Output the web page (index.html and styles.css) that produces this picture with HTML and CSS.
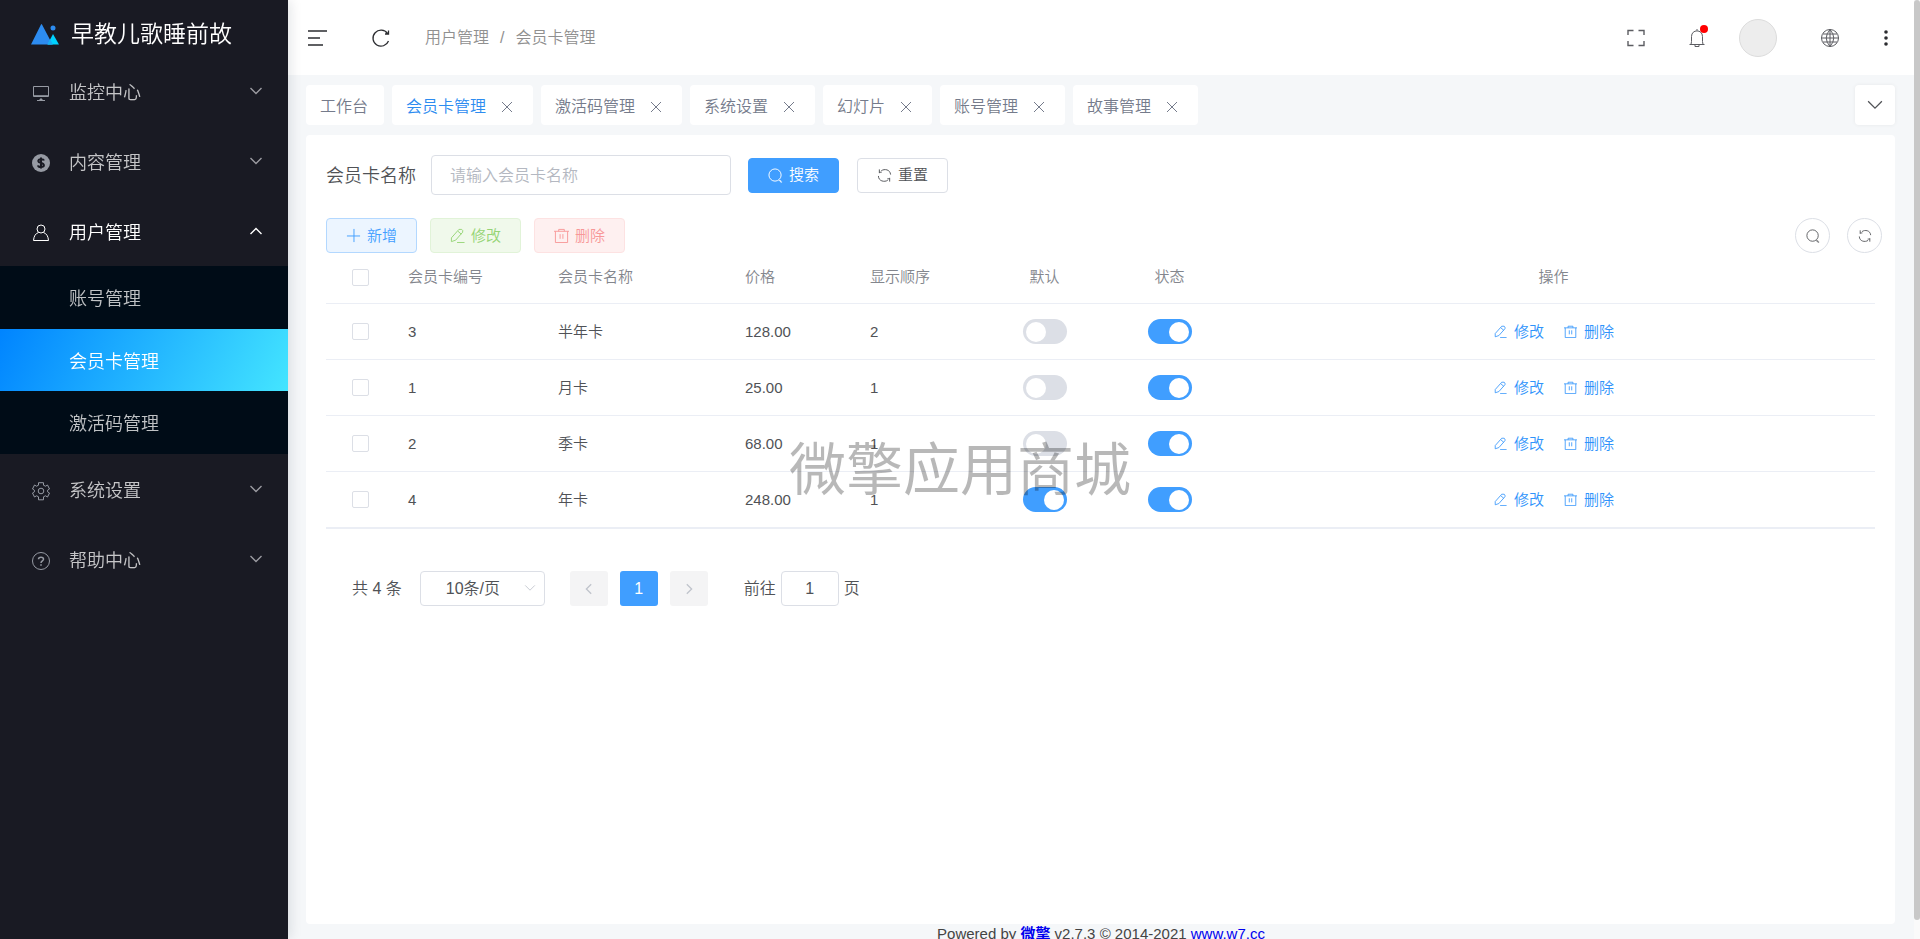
FILE: index.html
```html
<!DOCTYPE html>
<html lang="zh-CN">
<head>
<meta charset="utf-8">
<title>会员卡管理</title>
<link rel="stylesheet" href="styles.css">
</head>
<body>
<svg class="sprite" aria-hidden="true">
  <symbol id="i-down" viewBox="0 0 16 16"><path d="M2.5 5 8 10.5 13.5 5"/></symbol>
  <symbol id="i-up" viewBox="0 0 16 16"><path d="M2.5 11 8 5.500 13.500 11"/></symbol>
  <symbol id="i-close" viewBox="0 0 16 16"><path d="M3 3l10 10M13 3 3 13"/></symbol>
  <symbol id="i-search" viewBox="0 0 16 16"><circle cx="7.500" cy="7.500" r="6.500"/><path d="M11.500 13.500h2v1.500h1.500"/></symbol>
  <symbol id="i-sync" viewBox="0 0 16 16"><path d="M2.500 1.500v4M2.500 4.500H5M4.500 3C8 .5 14 1.500 14.500 7M1.500 8.500c0 5.500 6.500 7 10 4.500M13.500 14.500v-4M13.500 11.500H11"/></symbol>
  <symbol id="i-edit" viewBox="0 0 16 16"><path d="M9.500 1.500h3l1 1v2L6 13l-4.500 1.500V10.500zM8.500 3.500l3.500 3M7.500 15.500h8"/></symbol>
  <symbol id="i-trash" viewBox="0 0 16 16"><path d="M0 3.500h16M5 3.500v-2h6v2M1.500 3.500v12h13v-12M6.500 6.500v5M9.500 6.500v5"/></symbol>
  <symbol id="i-plus" viewBox="0 0 16 16"><path d="M8.500 1v14M1 8.500h14"/></symbol>
</svg>
<div class="app">
  <aside class="sidebar">
    <div class="brand">
      <svg class="logo" viewBox="0 0 28 22" aria-hidden="true"><path fill="#2d8cf0" d="M10 1.500Q10.500 .5 11 1.500L21.500 21.500H0z"/><path fill="#00d2ff" d="M22 11 28 21.500H16.500z"/><path fill="#1cabf2" d="M19.300 16 21.800 21.500H16.500z"/><circle cx="22" cy="5" r="2.500" fill="#2d8cf0"/></svg>
      <span>早教儿歌睡前故</span>
    </div>
    <nav>
      <button class="menu"><svg class="ico" viewBox="0 0 18 18"><path d="M1.500 2.500h15v10h-15zM2 11.700h14M5 16.500h8M9 14v2.500"/><path d="M7.500 15.500h3"/></svg><span>监控中心</span><svg class="arrow"><use href="#i-down"/></svg></button>
      <button class="menu"><svg class="ico" viewBox="0 0 18 18"><circle cx="9" cy="9" r="9" fill="currentColor" stroke="none"/><path class="dark" d="M12 6.500C11.500 4.700 6.300 4.500 6.300 7 6.300 9.300 11.900 8.500 11.900 11.200 11.900 13.500 6.200 13.500 6 11.300M9 3.500v11"/></svg><span>内容管理</span><svg class="arrow"><use href="#i-down"/></svg></button>
      <button class="menu open"><svg class="ico" viewBox="0 0 18 18"><circle cx="9" cy="5" r="4"/><path d="M6.500 8.500Q2 10 1.500 16.500h15Q16 10 11.500 8.500"/></svg><span>用户管理</span><svg class="arrow"><use href="#i-up"/></svg></button>
      <div class="submenu">
        <a href="#">账号管理</a>
        <a href="#" class="active">会员卡管理</a>
        <a href="#">激活码管理</a>
      </div>
      <button class="menu"><svg class="ico" viewBox="0 0 18 18"><path d="M6.500.7h5v2.500l2 1 2-1.200 2 4-2 1.300v1.400l2 1.300-2 4-2-1.200-2 1v3h-5v-3l-2-1-2 1.200-2-4 2-1.300V8.300L.5 7l2-4 2 1.200 2-1z"/><circle cx="9" cy="9" r="2.800"/></svg><span>系统设置</span><svg class="arrow"><use href="#i-down"/></svg></button>
      <button class="menu"><svg class="ico" viewBox="0 0 18 18"><circle cx="9" cy="9" r="8.500"/><path d="M6.500 7.200C6.500 4.500 11.500 4.500 11.500 7.200 11.500 8.800 9 9 9 11M9 12.300v1.500" stroke-width="1.500"/></svg><span>帮助中心</span><svg class="arrow"><use href="#i-down"/></svg></button>
    </nav>
  </aside>

  <main class="main">
    <header class="header">
      <button class="tool" aria-label="折叠菜单"><svg class="fold" viewBox="0 0 20 18"><path d="M0 2h19M0 9h12M0 16h15"/></svg></button>
      <button class="tool reload" aria-label="刷新"><svg viewBox="0 0 18 18"><path d="M16.500 12A8 8 0 1 1 15.500 4.500M16.500 1.500v3.500h-3.500"/></svg></button>
      <div class="crumbs"><a href="#">用户管理</a><span>/</span><a href="#">会员卡管理</a></div>
      <div class="tools">
        <button class="tool full" aria-label="全屏"><svg viewBox="0 0 18 18"><path d="M1 6V1.500h5.500M11.500 1.500H17V6M17 12v4.500h-5.500M6.500 16.500H1V12"/></svg></button>
        <button class="tool bell" aria-label="通知"><svg viewBox="0 0 18 20"><path d="M9 1v1.500M1.500 16.500h15M3 16.500l.5-3v-5C3.500 1 14.500 1 14.500 8.500v5l.5 3M7 17v1.500h4V17"/></svg><i class="dot"></i></button>
        <button class="avatar" aria-label="用户"></button>
        <button class="tool globe" aria-label="语言"><svg viewBox="0 0 18 18"><circle cx="9" cy="9" r="8.500"/><path d="M.5 9h17M2 5h14M2 13h14M9 .5v17M9 .5Q1.500 9 9 17.500M9 .5Q16.500 9 9 17.500"/></svg></button>
        <button class="tool more" aria-label="更多"><svg viewBox="0 0 18 18"><circle cx="9" cy="3" r="1.800"/><circle cx="9" cy="9" r="1.800"/><circle cx="9" cy="15" r="1.800"/></svg></button>
      </div>
    </header>

    <div class="tabbar">
      <div class="tab"><a href="#">工作台</a></div>
      <div class="tab current"><a href="#">会员卡管理</a><button aria-label="关闭"><svg><use href="#i-close"/></svg></button></div>
      <div class="tab"><a href="#">激活码管理</a><button aria-label="关闭"><svg><use href="#i-close"/></svg></button></div>
      <div class="tab"><a href="#">系统设置</a><button aria-label="关闭"><svg><use href="#i-close"/></svg></button></div>
      <div class="tab"><a href="#">幻灯片</a><button aria-label="关闭"><svg><use href="#i-close"/></svg></button></div>
      <div class="tab"><a href="#">账号管理</a><button aria-label="关闭"><svg><use href="#i-close"/></svg></button></div>
      <div class="tab"><a href="#">故事管理</a><button aria-label="关闭"><svg><use href="#i-close"/></svg></button></div>
      <button class="tabmenu" aria-label="标签操作"><svg><use href="#i-down"/></svg></button>
    </div>

    <section class="panel">
      <form class="search">
        <label for="name">会员卡名称</label>
        <input id="name" type="text" placeholder="请输入会员卡名称">
        <button type="button" class="btn primary"><svg><use href="#i-search"/></svg>搜索</button>
        <button type="reset" class="btn"><svg><use href="#i-sync"/></svg>重置</button>
      </form>
      <div class="actions">
        <button class="btn add"><svg><use href="#i-plus"/></svg>新增</button>
        <button class="btn edit" disabled><svg><use href="#i-edit"/></svg>修改</button>
        <button class="btn del" disabled><svg><use href="#i-trash"/></svg>删除</button>
        <button class="round first" aria-label="显示搜索"><svg><use href="#i-search"/></svg></button>
        <button class="round" aria-label="刷新列表"><svg><use href="#i-sync"/></svg></button>
      </div>

      <table class="grid">
        <colgroup><col class="c-check"><col class="c-id"><col class="c-name"><col class="c-num"><col class="c-num"><col class="c-num"><col class="c-num"><col></colgroup>
        <thead>
          <tr><th class="mid"><input type="checkbox" class="box" aria-label="全选"></th><th>会员卡编号</th><th>会员卡名称</th><th>价格</th><th>显示顺序</th><th class="mid">默认</th><th class="mid">状态</th><th class="mid">操作</th></tr>
        </thead>
        <tbody>
          <tr><td class="mid"><input type="checkbox" class="box" aria-label="选择 3"></td><td>3</td><td>半年卡</td><td>128.00</td><td>2</td><td class="mid"><input type="checkbox" class="switch" aria-label="默认"></td><td class="mid"><input type="checkbox" class="switch" aria-label="状态" checked></td><td><div class="ops"><button><svg><use href="#i-edit"/></svg>修改</button><button><svg><use href="#i-trash"/></svg>删除</button></div></td></tr>
          <tr><td class="mid"><input type="checkbox" class="box" aria-label="选择 1"></td><td>1</td><td>月卡</td><td>25.00</td><td>1</td><td class="mid"><input type="checkbox" class="switch" aria-label="默认"></td><td class="mid"><input type="checkbox" class="switch" aria-label="状态" checked></td><td><div class="ops"><button><svg><use href="#i-edit"/></svg>修改</button><button><svg><use href="#i-trash"/></svg>删除</button></div></td></tr>
          <tr><td class="mid"><input type="checkbox" class="box" aria-label="选择 2"></td><td>2</td><td>季卡</td><td>68.00</td><td>1</td><td class="mid"><input type="checkbox" class="switch" aria-label="默认"></td><td class="mid"><input type="checkbox" class="switch" aria-label="状态" checked></td><td><div class="ops"><button><svg><use href="#i-edit"/></svg>修改</button><button><svg><use href="#i-trash"/></svg>删除</button></div></td></tr>
          <tr><td class="mid"><input type="checkbox" class="box" aria-label="选择 4"></td><td>4</td><td>年卡</td><td>248.00</td><td>1</td><td class="mid"><input type="checkbox" class="switch" aria-label="默认" checked></td><td class="mid"><input type="checkbox" class="switch" aria-label="状态" checked></td><td><div class="ops"><button><svg><use href="#i-edit"/></svg>修改</button><button><svg><use href="#i-trash"/></svg>删除</button></div></td></tr>
        </tbody>
      </table>

      <div class="pager">
        <span>共 4 条</span>
        <div class="size"><select aria-label="每页条数"><option>10条/页</option></select><svg><use href="#i-down"/></svg></div>
        <div class="pages">
          <button disabled aria-label="上一页"><svg viewBox="0 0 16 16"><path d="M10.500 2.500 5 8l5.500 5.500"/></svg></button>
          <button class="on">1</button>
          <button disabled aria-label="下一页"><svg viewBox="0 0 16 16"><path d="M5.500 2.500 11 8l-5.500 5.500"/></svg></button>
        </div>
        <div class="jump"><label for="page">前往</label><input id="page" type="text" value="1"><span>页</span></div>
      </div>
    </section>
    <footer class="footer">Powered by <a href="#"><b>微擎</b></a> v2.7.3 © 2014-2021 <a href="#">www.w7.cc</a></footer>
  </main>
  <div class="scroll"><div class="thumb"></div></div>
</div>
<div class="watermark">微擎应用商城</div>
</body>
</html>
```
FILE: styles.css
```css
* { box-sizing: border-box; }
body {
  margin: 0;
  height: 100vh;
  overflow: hidden;
  background: #f5f7f9;
  color: #505256;
  font: 350 16px/20px "Liberation Sans", "Noto Sans CJK SC", sans-serif;
}
button, input, select { font: inherit; color: inherit; margin: 0; }
button { border: 0; padding: 0; background: none; }
a { text-decoration: none; color: inherit; }
svg { fill: none; stroke: currentColor; stroke-width: 1; width: 16px; height: 16px; flex: none; display: block; }
.sprite { display: none; }

.app { display: grid; grid-template-columns: 288px minmax(0, 1fr) 6px; height: 100vh; }

/* sidebar */
.sidebar {
  z-index: 1;
  background: #191a23;
  color: rgba(255, 255, 255, .75);
  font-size: 18px;
  box-shadow: 2px 0 12px rgba(0, 21, 41, .12);
}
.brand { display: flex; align-items: center; gap: 12px; height: 56px; padding: 12px 0 0 31px; color: #fff; font-size: 23px; line-height: 32px; }
.logo { width: 28px; height: 22px; stroke: none; }
.menu { display: flex; align-items: center; width: 100%; height: 70px; padding: 0 24px 0 32px; text-align: left; }
.menu .ico, .menu span { margin-top: 3px; }
.menu .ico { width: 18px; height: 18px; margin-right: 19px; color: #969aa3; overflow: visible; }
.menu .dark { stroke: #191a23; stroke-width: 2; }
.menu .arrow { margin-left: auto; color: #9b9ba1; stroke-width: 1.400; }
.menu.open, .menu.open .ico, .menu.open .arrow { color: #fff; }
.submenu { background: #000c17; }
.submenu a { display: flex; align-items: center; height: 63px; padding: 3px 0 0 69px; }
.submenu .active { height: 62px; color: #fff; background: linear-gradient(118deg, #0084ff, #44e5ff); }

/* header */
.main { display: flex; flex-direction: column; overflow: hidden; }
.header { display: flex; flex: none; align-items: center; height: 75px; padding: 0 19px 0 20px; background: #fff; color: #909090; }
.tool svg { width: 18px; height: 18px; overflow: visible; }
.tool { color: #2b2c30; }
.tool .fold { width: 20px; stroke-width: 1.500; }
.reload { margin-left: 44px; }
.reload svg { stroke-width: 1.300; }
.crumbs { display: flex; gap: 11px; margin-left: 35px; }
.tools { display: flex; align-items: center; margin-left: auto; }
.full, .bell, .globe { color: #5c5d62; }
.full svg { stroke-width: 1.400; }
.bell { position: relative; margin: 0 33px 0 43px; }
.bell svg { height: 20px; }
.dot { position: absolute; top: -3px; right: -2px; width: 8px; height: 8px; border-radius: 50%; background: #f00; }
.avatar { width: 38px; height: 38px; border: 1px solid #dcdcdc; border-radius: 50%; background: #ededed; }
.globe { margin: 0 38px 0 44px; }
.more svg { fill: currentColor; stroke: none; }

/* tabs */
.tabbar { display: flex; flex: none; align-items: center; gap: 8px; height: 60px; padding: 0 19px 0 18px; }
.tab { display: flex; align-items: center; gap: 13px; height: 40px; padding: 3px 16px 0 14px; background: #fff; border-radius: 4px; color: #757b8b; }
.tab button { padding-right: 2px; }
.current a { color: #2d8cf0; }
.tabmenu { display: grid; place-items: center; width: 40px; height: 40px; margin-left: auto; background: #fff; border-radius: 4px; box-shadow: 0 0 4px rgba(0, 0, 0, .06); }
.tabmenu svg { width: 20px; height: 20px; }

/* panel */
.panel { flex: none; min-height: calc(100vh - 150px); margin: 0 19px 0 18px; padding: 20px; background: #fff; border-radius: 4px; font-size: 15px; }
.search { display: flex; align-items: center; gap: 17px; height: 40px; margin-bottom: 23px; }
.search label { padding-top: 1px; font-size: 18px; }
.search input { width: 300px; height: 40px; margin-left: -2px; padding: 2px 18px 0; border: 1px solid #dcdfe6; border-radius: 4px; background: #fff; font-size: 16px; }
.search input::placeholder { color: #b4b8c1; opacity: 1; }
.btn { display: flex; align-items: center; justify-content: center; gap: 6px; height: 35px; padding: 0 19px; border: 1px solid #dcdfe6; border-radius: 4px; background: #fff; }
.btn svg { width: 15px; height: 15px; }
.primary { margin-right: 1px; background: #409eff; border-color: #409eff; color: #fff; }
.actions { display: flex; gap: 13px; margin-right: -7px; }
.add { background: #ecf5ff; border-color: #b3d8ff; color: #409eff; }
.edit { background: #f0f9eb; border-color: #e1f3d8; color: #95d475; }
.del { background: #fef0f0; border-color: #fde2e2; color: #f89898; }
.round { display: grid; place-items: center; width: 35px; height: 35px; border: 1px solid #dcdfe6; border-radius: 50%; margin-left: 4px; }
.round.first { margin-left: auto; }
.round svg { width: 14px; height: 14px; }

.grid { width: 100%; table-layout: fixed; border-collapse: separate; border-spacing: 0; border-bottom: 1px solid #ebeef5; }
.c-check { width: 69px; }
.c-id { width: 150px; }
.c-name { width: 187px; }
.c-num { width: 125px; }
.grid th, .grid td { height: 56px; padding: 0 13px; border-bottom: 1px solid #ebeef5; text-align: left; }
.grid th { height: 51px; padding-bottom: 2px; color: #83868d; font-weight: 350; }
.grid .mid { text-align: center; }
.box, .switch { appearance: none; display: block; margin: 0 auto; }
.box { width: 17px; height: 17px; border: 1px solid #dcdfe6; border-radius: 2px; background: #fff; }
.switch { display: flex; align-items: center; width: 44px; height: 25px; padding: 0 3px; border-radius: 13px; background: #dcdfe6; }
.switch::before { content: ""; width: 20px; height: 20px; border-radius: 50%; background: #fff; }
.switch:checked { justify-content: flex-end; background: #409eff; }
.ops { display: flex; justify-content: center; gap: 20px; padding-left: 1px; color: #2f93fb; }
.ops button { display: flex; align-items: center; gap: 7px; }
.ops svg { width: 13px; height: 13px; }

.pager { display: flex; align-items: center; margin: 42px 0 0 26px; font-size: 16px; }
.size { position: relative; margin: 0 25px 0 18px; }
.size select { appearance: none; width: 125px; height: 35px; padding: 0 0 0 25px; border: 1px solid #dcdfe6; border-radius: 4px; background: #fff; }
.size svg { position: absolute; right: 8px; top: 10px; width: 14px; height: 14px; color: #c0c4cc; }
.pages { display: flex; gap: 12px; }
.pages button { display: grid; place-items: center; width: 38px; height: 35px; border-radius: 3px; background: #f4f4f5; color: #c0c4cc; }
.pages svg { width: 14px; height: 14px; stroke-width: 1.500; }
.pages .on { background: #409eff; color: #fff; }
.jump { display: flex; align-items: center; gap: 5px; margin-left: 36px; }
.jump input { width: 58px; height: 35px; border: 1px solid #dcdfe6; border-radius: 4px; text-align: center; background: #fff; }

.footer { flex: none; text-align: center; color: #444; font-size: 15px; }
.footer a { color: #00e; }

.scroll { background: #fafafa; }
.thumb { height: 98%; border-radius: 3px; background: #c8c8c8; }
.watermark { position: fixed; inset: 0; display: grid; place-items: center; color: rgba(0, 0, 0, .28); font-size: 57px; font-weight: 400; line-height: 60px; pointer-events: none; }
```
